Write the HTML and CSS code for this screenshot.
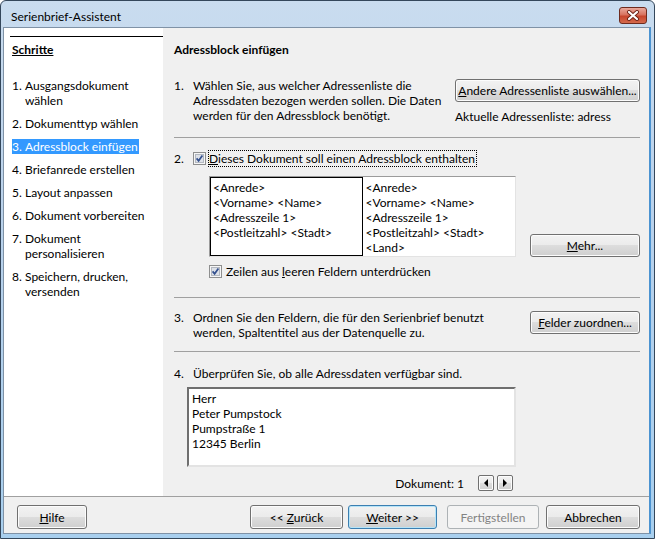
FILE: index.html
```html
<!DOCTYPE html>
<html lang="de">
<head>
    <meta charset="UTF-8">
    <title>Serienbrief-Assistent</title>
    <link rel="stylesheet" href="styles.css">
</head>
<body>
    <div class="window">
        <div class="titlebar">
            <span class="title">Serienbrief-Assistent</span>
            <div class="close">
                <svg width="14" height="11" viewBox="0 0 14 11">
                    <path d="M3 2 L11 9 M11 2 L3 9" stroke="#6b2216" stroke-width="4" stroke-linecap="round"/>
                    <path d="M3 2 L11 9 M11 2 L3 9" stroke="#fff" stroke-width="2.2" stroke-linecap="round"/>
                </svg>
            </div>
        </div>

        <div class="client">
            <div class="main">
                <aside class="steps">
                    <div class="steps-head">Schritte</div>
                    <ol class="step-list">
                        <li><span class="num">1.</span><span>Ausgangsdokument wählen</span></li>
                        <li><span class="num">2.</span><span>Dokumenttyp wählen</span></li>
                        <li class="active"><span class="num">3.</span><span>Adressblock einfügen</span></li>
                        <li><span class="num">4.</span><span>Briefanrede erstellen</span></li>
                        <li><span class="num">5.</span><span>Layout anpassen</span></li>
                        <li><span class="num">6.</span><span>Dokument vorbereiten</span></li>
                        <li><span class="num">7.</span><span>Dokument personalisieren</span></li>
                        <li><span class="num">8.</span><span>Speichern, drucken, versenden</span></li>
                    </ol>
                </aside>

                <section class="page">
                    <h1>Adressblock einfügen</h1>

                    <div class="sec sec-1">
                        <span class="num">1.</span>
                        <p>Wählen Sie, aus welcher Adressenliste die Adressdaten bezogen werden sollen. Die Daten werden für den Adressblock benötigt.</p>
                        <div class="side">
                            <button class="btn btn-wide"><u>A</u>ndere Adressenliste auswählen...</button>
                            <div class="current">Aktuelle Adressenliste: adress</div>
                        </div>
                    </div>

                    <hr>

                    <div class="check-head">
                        <span class="num">2.</span>
                        <span class="checkbox">
                            <svg width="13" height="13" viewBox="0 0 13 13">
                                <rect x="0.5" y="0.5" width="12" height="12" fill="#f6f6f6" stroke="#8e8f8f"/>
                                <rect x="2.5" y="2.5" width="8" height="8" fill="#dde1e8" stroke="#b3b8c0"/>
                                <path d="M3.6 6.4 L5.6 8.8 L9.4 3.4" fill="none" stroke="#33508e" stroke-width="1.7"/>
                            </svg>
                        </span>
                        <label class="focus"><u>D</u>ieses Dokument soll einen Adressblock enthalten</label>
                    </div>

                    <div class="addr-row">
                        <div class="addr-box">
                            <div class="addr-item selected">
                                &lt;Anrede&gt;<br>
                                &lt;Vorname&gt; &lt;Name&gt;<br>
                                &lt;Adresszeile 1&gt;<br>
                                &lt;Postleitzahl&gt; &lt;Stadt&gt;
                            </div>
                            <div class="addr-item">
                                &lt;Anrede&gt;<br>
                                &lt;Vorname&gt; &lt;Name&gt;<br>
                                &lt;Adresszeile 1&gt;<br>
                                &lt;Postleitzahl&gt; &lt;Stadt&gt;<br>
                                &lt;Land&gt;
                            </div>
                        </div>
                        <button class="btn btn-side"><u>M</u>ehr...</button>
                    </div>

                    <div class="opt-row">
                        <span class="checkbox">
                            <svg width="13" height="13" viewBox="0 0 13 13">
                                <rect x="0.5" y="0.5" width="12" height="12" fill="#f6f6f6" stroke="#8e8f8f"/>
                                <rect x="2.5" y="2.5" width="8" height="8" fill="#dde1e8" stroke="#b3b8c0"/>
                                <path d="M3.6 6.4 L5.6 8.8 L9.4 3.4" fill="none" stroke="#33508e" stroke-width="1.7"/>
                            </svg>
                        </span>
                        <label>Zeilen aus <u>l</u>eeren Feldern unterdrücken</label>
                    </div>

                    <hr class="hr-2">

                    <div class="sec sec-3">
                        <span class="num">3.</span>
                        <p>Ordnen Sie den Feldern, die für den Serienbrief benutzt werden, Spaltentitel aus der Datenquelle zu.</p>
                        <button class="btn btn-side"><u>F</u>elder zuordnen...</button>
                    </div>

                    <hr class="hr-3">

                    <div class="sec-4">
                        <span class="num">4.</span>
                        <span>Überprüfen Sie, ob alle Adressdaten verfügbar sind.</span>
                    </div>

                    <div class="preview-wrap">
                        <div class="preview">
                            Herr<br>
                            Peter Pumpstock<br>
                            Pumpstraße 1<br>
                            12345 Berlin
                        </div>
                        <div class="doc-nav">
                            <span>Dokument: 1</span>
                            <button class="nav-btn">
                                <svg width="6" height="8" viewBox="0 0 6 8"><path d="M5 0 L5 8 L1 4 Z" fill="#000"/></svg>
                            </button>
                            <button class="nav-btn">
                                <svg width="6" height="8" viewBox="0 0 6 8"><path d="M1 0 L1 8 L5 4 Z" fill="#000"/></svg>
                            </button>
                        </div>
                    </div>
                </section>
            </div>

            <div class="footer">
                <button class="btn btn-help"><u>H</u>ilfe</button>
                <button class="btn btn-back">&lt;&lt; <u>Z</u>urück</button>
                <button class="btn btn-next btn-default"><u>W</u>eiter &gt;&gt;</button>
                <button class="btn btn-finish" disabled>Fertigstellen</button>
                <button class="btn btn-cancel">Abbrechen</button>
            </div>
        </div>
    </div>
</body>
</html>
```

FILE: styles.css
```css
* {
    margin: 0;
    padding: 0;
    box-sizing: border-box;
}

body {
    background: #fff;
    font-family: Lato, "Liberation Sans", sans-serif;
    font-size: 12px;
    color: #000;
}

u {
    text-decoration: underline;
}

.window {
    width: 655px;
    height: 539px;
    border: 1px solid #34475b;
    border-radius: 6px 6px 0 0;
    background: linear-gradient(#c9dcef, #bad2eb 40%, #a8cfee);
    padding: 0 3px 4px 2px;
    display: flex;
    flex-direction: column;
}

.titlebar {
    height: 26px;
    display: flex;
    justify-content: space-between;
    align-items: flex-start;
    padding-left: 8px;
}

.title {
    margin-top: 8px;
    line-height: 15px;
    color: #000;
}

.close {
    width: 28px;
    height: 17px;
    margin-top: 6px;
    margin-right: 4px;
    border: 1px solid #6e2b1e;
    border-radius: 3px;
    background: linear-gradient(#e9a99c, #d8735f 45%, #c7462d 55%, #d46a4c);
    display: flex;
    align-items: center;
    justify-content: center;
}

.client {
    flex: 1;
    border: 1px solid #7f92a6;
    border-right: 2px solid #4b93d1;
    background: #f0f0f0;
    display: flex;
    flex-direction: column;
}

.main {
    display: flex;
    height: 468px;
}

/* left column: steps */
.steps {
    width: 159px;
    background: #fff;
    padding: 8px 0 0 6px;
}

.steps-head {
    border-top: 1px solid #000;
    padding: 5px 0 0 2px;
    font-weight: bold;
    text-decoration: underline;
    line-height: 15px;
}

.step-list {
    list-style: none;
    margin-top: 21px;
}

.step-list li {
    display: flex;
    width: fit-content;
    margin: 0 0 8px 2px;
    line-height: 15px;
}

.step-list .num {
    width: 13px;
    flex: none;
}

.step-list li.active {
    background: #3399ff;
    color: #fff;
    padding-right: 1px;
}

/* right column */
.page {
    flex: 1;
    padding: 14px 9px 0 11px;
    line-height: 15px;
}

h1 {
    font-size: 12px;
    font-weight: bold;
    line-height: 15px;
}

.num {
    width: 19px;
    flex: none;
}

.sec {
    display: grid;
    grid-template-columns: 19px 1fr 110px;
}

.sec-1 {
    grid-template-columns: 19px 1fr 185px;
    margin-top: 21px;
}

.sec .btn {
    margin-top: 1px;
}

.btn-wide {
    width: 185px;
}

.current {
    margin-top: 7px;
}

hr {
    border: 0;
    border-top: 1px solid #a0a0a0;
    margin-top: 13px;
}

.hr-2 {
    margin-top: 19px;
}

.hr-3 {
    margin-top: 11px;
}

.check-head {
    display: flex;
    align-items: center;
    height: 16px;
    margin-top: 12px;
}

.checkbox {
    width: 13px;
    height: 13px;
    display: flex;
}

.focus {
    margin-left: 3px;
    padding: 0 1px 0 0;
    outline: 1px dotted #000;
    outline-offset: 0;
    line-height: 15px;
}

.addr-row {
    display: flex;
    align-items: flex-end;
    justify-content: space-between;
    margin-top: 10px;
    padding-left: 35px;
}

.addr-box {
    width: 307px;
    height: 81px;
    background: #fff;
    border: 1px solid;
    border-color: #9b9b9b #e3e3e3 #e3e3e3 #9b9b9b;
    display: flex;
}

.addr-item {
    width: 153px;
    padding: 3px 0 0 3px;
    line-height: 15px;
}

.addr-item.selected {
    border: 1px solid #000;
    padding: 2px 0 0 2px;
}

.btn-side {
    width: 110px;
}

.opt-row {
    display: flex;
    align-items: center;
    margin-top: 8px;
    padding-left: 35px;
    height: 13px;
}

.opt-row label {
    margin-left: 4px;
}

.sec-3 {
    margin-top: 12px;
}

.sec-3 p {
    padding-right: 30px;
}

.sec-4 {
    display: flex;
    margin-top: 14px;
}

.preview-wrap {
    width: 329px;
    margin: 6px 0 0 13px;
}

.preview {
    height: 80px;
    background: #fff;
    border: 2px solid;
    border-color: #6f6f6f #e3e3e3 #e3e3e3 #6f6f6f;
    padding: 2px 0 0 3px;
    line-height: 15px;
}

.doc-nav {
    display: flex;
    justify-content: flex-end;
    align-items: center;
    margin-top: 8px;
    padding-right: 3px;
}

.doc-nav span {
    margin-right: 11px;
}

.nav-btn {
    width: 16px;
    height: 16px;
    margin-left: 3px;
    border: 1px solid #707070;
    border-radius: 2px;
    background: linear-gradient(#f2f2f2, #ebebeb 50%, #dddddd 50%, #cfcfcf);
    box-shadow: inset 0 0 0 1px #fcfcfc;
    display: flex;
    align-items: center;
    justify-content: center;
}

/* buttons */
.btn {
    height: 23px;
    border: 1px solid #707070;
    border-radius: 3px;
    background: linear-gradient(#f2f2f2, #ebebeb 50%, #dddddd 50%, #cfcfcf);
    box-shadow: inset 0 0 0 1px #fcfcfc;
    font-family: inherit;
    font-size: 12px;
    color: #000;
}

.btn-default {
    border-color: #3c7fb1;
    box-shadow: inset 0 0 0 1px #b6e4f8;
}

.btn:disabled {
    border-color: #adb2b5;
    background: #f4f4f4;
    box-shadow: none;
    color: #838383;
}

.footer {
    flex: 1;
    border-top: 1px solid #a0a0a0;
    display: flex;
    align-items: flex-start;
    padding: 8px 9px 0 13px;
}

.footer .btn {
    height: 24px;
}

.btn-help {
    width: 70px;
}

.btn-back {
    width: 93px;
    margin-left: auto;
}

.btn-next {
    width: 89px;
    margin-left: 5px;
}

.btn-finish {
    width: 92px;
    margin-left: 10px;
}

.btn-cancel {
    width: 94px;
    margin-left: 7px;
}
```
